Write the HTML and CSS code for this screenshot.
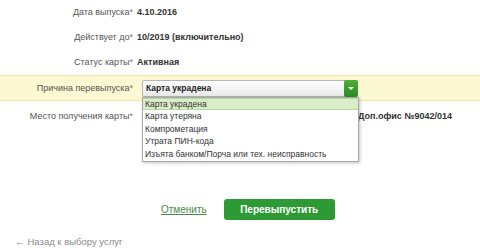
FILE: index.html
```html
<!DOCTYPE html>
<html lang="ru">
<head>
    <meta charset="UTF-8">
    <title>Перевыпуск карты</title>
    <link rel="stylesheet" href="styles.css">
</head>
<body>
    <div class="form">
        <div class="row">
            <div class="label">Дата выпуска<span class="req">*</span></div>
            <div class="value">4.10.2016</div>
        </div>
        <div class="row">
            <div class="label">Действует до<span class="req">*</span></div>
            <div class="value">10/2019 (включительно)</div>
        </div>
        <div class="row">
            <div class="label">Статус карты<span class="req">*</span></div>
            <div class="value">Активная</div>
        </div>
        <div class="row row-active">
            <div class="label">Причина перевыпуска<span class="req">*</span></div>
            <div class="field">
                <div class="select">
                    <span class="select-text">Карта украдена</span>
                    <span class="select-arrow"></span>
                </div>
                <!-- opened list -->
                <ul class="options">
                    <li class="selected">Карта украдена</li>
                    <li>Карта утеряна</li>
                    <li>Компрометация</li>
                    <li>Утрата ПИН-кода</li>
                    <li>Изъята банком/Порча или тех. неисправность</li>
                </ul>
            </div>
        </div>
        <div class="row row-place">
            <div class="label">Место получения карты<span class="req">*</span></div>
            <div class="value value-place">Доп.офис №9042/014</div>
        </div>
    </div>

    <div class="actions">
        <a href="#" class="cancel">Отменить</a>
        <a href="#" class="submit">Перевыпустить</a>
    </div>

    <div class="back">
        <a href="#"><span class="back-arrow">&larr;</span>Назад к выбору услуг</a>
    </div>
</body>
</html>
```

FILE: styles.css
```css
/* Reset */
* {
    margin: 0;
    padding: 0;
    box-sizing: border-box;
}

body {
    background: #fff;
    font-family: 'Liberation Sans', Arial, sans-serif;
    font-size: 9px;
    color: #333;
    width: 480px;
    height: 250px;
    overflow: hidden;
}

.form {
    margin-top: -1px;
}

.row {
    display: grid;
    grid-template-columns: 133px 1fr;
    column-gap: 4px;
    align-items: center;
    height: 25px;
}

.label {
    text-align: right;
    color: #555;
}

.req {
    color: #777;
}

.value {
    font-weight: bold;
    color: #333;
}

/* highlighted row with select */
.row-active {
    height: 26px;
    margin-top: 1px;
    background: #fcf8d2;
    border-top: 1px solid #f1e8a8;
    border-bottom: 1px solid #f1e8a8;
    column-gap: 9px;
}

.field {
    position: relative;
    width: 216px;
}

.select {
    display: flex;
    align-items: center;
    height: 17px;
    border: 1px solid #b5b5b5;
    border-radius: 2px;
    background: linear-gradient(#ffffff, #e9e9e9);
}

.select-text {
    flex: 1;
    padding-left: 3px;
    font-weight: bold;
    font-size: 8.5px;
    color: #222;
}

.select-arrow {
    position: relative;
    width: 14px;
    height: 17px;
    margin: -1px -1px -1px 0;
    border-radius: 2px;
    background: linear-gradient(#4fae3a, #2b8a22);
}

.select-arrow:after {
    content: '';
    position: absolute;
    left: 4px;
    top: 7px;
    border-left: 3px solid transparent;
    border-right: 3px solid transparent;
    border-top: 3px solid #fff;
}

.options {
    position: absolute;
    top: 17px;
    left: 0;
    width: 217px;
    list-style: none;
    background: #fff;
    border: 1px solid #a9a9a9;
    box-shadow: 1px 1px 3px rgba(0, 0, 0, 0.25);
    padding-bottom: 1px;
    z-index: 10;
}

.options li {
    height: 12.5px;
    line-height: 12.5px;
    padding-left: 2px;
    font-size: 8.5px;
    color: #333;
    white-space: nowrap;
}

.options li.selected {
    background: #d9edc9;
    border-top: 1px solid #b8da9c;
    border-bottom: 1px solid #b8da9c;
    line-height: 10.5px;
}

.row-place {
    height: 30px;
    column-gap: 4px;
}

.value-place {
    padding-left: 221px;
}

/* buttons */
.actions {
    display: flex;
    align-items: center;
    gap: 17px;
    padding-left: 161px;
    margin-top: 68px;
}

.cancel {
    font-size: 10px;
    color: #4b8a48;
    text-decoration: underline;
}

.submit {
    display: inline-block;
    width: 111px;
    height: 21px;
    line-height: 21px;
    text-align: center;
    background: #2e9a36;
    border-radius: 3px;
    color: #fff;
    font-weight: bold;
    font-size: 10px;
    text-decoration: none;
}

.back {
    margin-top: 16px;
    padding-left: 15px;
}

.back a {
    font-size: 9.5px;
    color: #8a8a8a;
    text-decoration: none;
}

.back-arrow {
    margin-right: 3px;
}
```
